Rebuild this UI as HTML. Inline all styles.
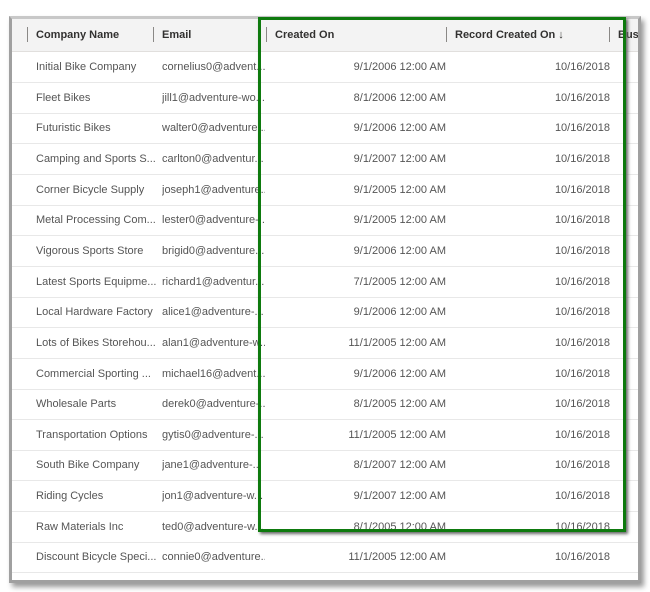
<!DOCTYPE html>
<html><head><style>
body{margin:0;width:650px;height:592px;background:#fff;position:relative;overflow:hidden;font-family:"Liberation Sans",sans-serif;}
.frame{position:absolute;left:9px;top:16px;width:626px;height:561px;border:3px solid #a0a0a0;border-top-color:#c8c8c8;box-shadow:3px 4px 5px #9a9a9a;background:#fff;overflow:hidden;}
.hdr{position:absolute;left:0;top:0;width:100%;height:32px;background:#f3f3f3;border-bottom:1px solid #e1dfdd;font-size:11px;color:#323130;font-weight:bold;}
.hdr span{position:absolute;top:10px;}
.bar{position:absolute;top:8px;width:1px;height:15px;background:#8a8886;}
.row{position:absolute;left:0;width:100%;height:30px;border-bottom:1px solid #e8e8e8;font-size:11px;color:#555;}
.row span{position:absolute;top:9px;white-space:nowrap;}
.green{position:absolute;left:258px;top:17px;width:362px;height:509px;border:3.5px solid #0e7a0e;box-shadow:2px 2px 3px #666;}
</style></head><body>
<div class="frame">
<div class="hdr">
<div class="bar" style="left:15px"></div><span style="left:24px">Company Name</span>
<div class="bar" style="left:141px"></div><span style="left:150px">Email</span>
<div class="bar" style="left:254px"></div><span style="left:263px">Created On</span>
<div class="bar" style="left:434px"></div><span style="left:443px">Record Created On ↓</span>
<div class="bar" style="left:597px"></div><span style="left:606px">Busi</span>
</div>
<div id="rows"></div>
</div>
<div class="green"></div>
<script>
var d=[["Initial Bike Company","cornelius0@advent...","9/1/2006 12:00 AM"],["Fleet Bikes","jill1@adventure-wo...","8/1/2006 12:00 AM"],["Futuristic Bikes","walter0@adventure...","9/1/2006 12:00 AM"],["Camping and Sports S...","carlton0@adventur...","9/1/2007 12:00 AM"],["Corner Bicycle Supply","joseph1@adventure...","9/1/2005 12:00 AM"],["Metal Processing Com...","lester0@adventure-...","9/1/2005 12:00 AM"],["Vigorous Sports Store","brigid0@adventure...","9/1/2006 12:00 AM"],["Latest Sports Equipme...","richard1@adventur...","7/1/2005 12:00 AM"],["Local Hardware Factory","alice1@adventure-...","9/1/2006 12:00 AM"],["Lots of Bikes Storehou...","alan1@adventure-w...","11/1/2005 12:00 AM"],["Commercial Sporting ...","michael16@advent...","9/1/2006 12:00 AM"],["Wholesale Parts","derek0@adventure-...","8/1/2005 12:00 AM"],["Transportation Options","gytis0@adventure-...","11/1/2005 12:00 AM"],["South Bike Company","jane1@adventure-...","8/1/2007 12:00 AM"],["Riding Cycles","jon1@adventure-w...","9/1/2007 12:00 AM"],["Raw Materials Inc","ted0@adventure-w...","8/1/2005 12:00 AM"],["Discount Bicycle Speci...","connie0@adventure...","11/1/2005 12:00 AM"]];
var h="";d.forEach(function(r,i){var t=33+i*30.65;h+='<div class="row" style="top:'+t+'px"><span style="left:24px">'+r[0]+'</span><span style="left:150px;width:103px;overflow:hidden">'+r[1]+'</span><span style="right:192px">'+r[2]+'</span><span style="right:28px">10/16/2018</span></div>';});
document.getElementById("rows").innerHTML=h;
</script>
</body></html>
